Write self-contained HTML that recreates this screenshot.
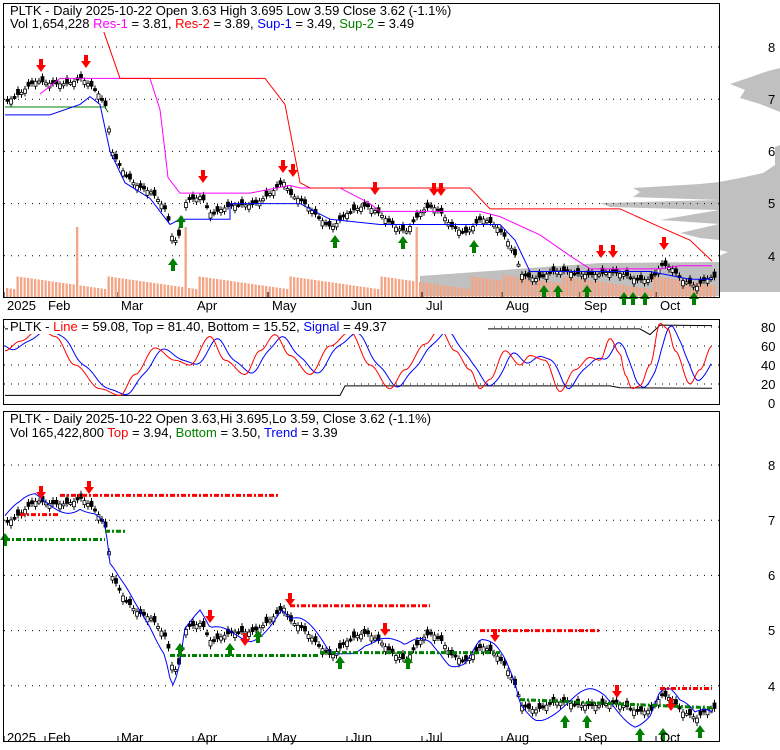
<!DOCTYPE html><html><head><style>
body{margin:0;background:#fff;width:780px;height:745px;overflow:hidden;font-family:"Liberation Sans",sans-serif}
svg text{font-family:"Liberation Sans",sans-serif;font-size:13px}
</style></head><body>
<svg id="s" width="780" height="745" xmlns="http://www.w3.org/2000/svg">
<rect width="780" height="745" fill="#fff"/>
<polygon points="780,68 768,71 742,80 730,84 745,90 740,98 760,104 775,110 780,112" fill="#c0c0c0"/>
<polygon points="780,145 775,147 775,165 763,173 740,178 719,182 700,184 633,188 640,192 633,197 719,200 600,203 610,207 719,210 660,220 719,224 680,233 700,238 719,240 719,250 728,252 719,256 719,262 600,263 420,276 420,296 719,296 719,292 780,292" fill="#c0c0c0"/>
<g id="g"></g>
<rect x="3.5" y="3.5" width="716" height="294" fill="none" stroke="#000"/>
<rect x="3.5" y="319.5" width="716" height="85" fill="none" stroke="#000"/>
<rect x="3.5" y="411.5" width="716" height="330" fill="none" stroke="#000"/>
<rect x="8" y="4" width="680" height="28" fill="#fff"/>
<text x="10" y="15">PLTK - Daily 2025-10-22 Open 3.63  High 3.695  Low 3.59  Close 3.62 (-1.1%)</text>
<text x="10" y="28">Vol 1,654,228 <tspan fill="#f0f">Res-1</tspan> = 3.81, <tspan fill="red">Res-2</tspan> = 3.89, <tspan fill="#00f">Sup-1</tspan> = 3.49, <tspan fill="green">Sup-2</tspan> = 3.49</text>
<rect x="8" y="320" width="480" height="14" fill="#fff"/>
<text x="10" y="331">PLTK - <tspan fill="red">Line</tspan> = 59.08, Top = 81.40, Bottom = 15.52, <tspan fill="#00f">Signal</tspan> = 49.37</text>
<rect x="8" y="412" width="560" height="28" fill="#fff"/>
<text x="10" y="423">PLTK - Daily 2025-10-22 Open 3.63,Hi 3.695,Lo 3.59, Close 3.62 (-1.1%)</text>
<text x="10" y="437">Vol 165,422,800 <tspan fill="red">Top</tspan> = 3.94, <tspan fill="green">Bottom</tspan> = 3.50, <tspan fill="#00f">Trend</tspan> = 3.39</text>
<g font-size="13">
<text x="7" y="310">2025</text><text x="48" y="310">Feb</text><text x="121" y="310">Mar</text><text x="197" y="310">Apr</text><text x="272" y="310">May</text><text x="351" y="310">Jun</text><text x="426" y="310">Jul</text><text x="506" y="310">Aug</text><text x="584" y="310">Sep</text><text x="660" y="310">Oct</text>
<text x="7" y="742">2025</text><text x="48" y="742">Feb</text><text x="121" y="742">Mar</text><text x="197" y="742">Apr</text><text x="272" y="742">May</text><text x="351" y="742">Jun</text><text x="426" y="742">Jul</text><text x="506" y="742">Aug</text><text x="584" y="742">Sep</text><text x="660" y="742">Oct</text>
<text x="768" y="52">8</text><text x="768" y="104">7</text><text x="768" y="156">6</text><text x="768" y="208">5</text><text x="768" y="261">4</text>
<text x="761" y="332">80</text><text x="761" y="351">60</text><text x="761" y="370">40</text><text x="761" y="389">20</text><text x="768" y="408">0</text>
<text x="768" y="470">8</text><text x="768" y="525">7</text><text x="768" y="580">6</text><text x="768" y="635">5</text><text x="768" y="691">4</text>
</g>
</svg>
<script>
var g=document.getElementById('g'),h='';
function L(x1,y1,x2,y2,c,w,d){h+='<line x1="'+x1+'" y1="'+y1+'" x2="'+x2+'" y2="'+y2+'" stroke="'+c+'" stroke-width="'+(w||1)+'"'+(d?' stroke-dasharray="'+d+'"':'')+'/>';}
function P(pts,c,w,d){h+='<polyline fill="none" stroke="'+c+'" stroke-width="'+(w||1)+'"'+(d?' stroke-dasharray="'+d+'"':'')+' points="'+pts.map(p=>p.join(',')).join(' ')+'"/>';}
var K=[[5,7.0],[20,7.1],[35,7.3],[45,7.3],[60,7.35],[80,7.4],[95,7.1],[105,6.8],[110,6.0],[120,5.7],[135,5.4],[150,5.2],[165,4.8],[172,4.2],[178,4.4],[185,5.1],[200,5.2],[210,4.8],[230,4.9],[250,5.0],[265,5.2],[282,5.4],[290,5.1],[300,5.0],[315,4.8],[330,4.6],[345,4.8],[365,4.9],[380,4.8],[395,4.6],[405,4.5],[420,4.8],[430,4.9],[440,4.8],[450,4.6],[465,4.5],[480,4.7],[495,4.5],[505,4.3],[515,4.0],[520,3.7],[535,3.6],[550,3.65],[570,3.65],[590,3.7],[605,3.7],[620,3.6],[635,3.5],[650,3.6],[660,3.9],[670,3.8],[680,3.5],[695,3.35],[705,3.55],[712,3.62]];
function interp(A,x){for(var i=1;i<A.length;i++)if(x<=A[i][0]){var a=A[i-1],b=A[i];var t=(x-a[0])/(b[0]-a[0]);t=(1-Math.cos(t*Math.PI))/2;return a[1]+(b[1]-a[1])*t;}return A[A.length-1][1];}
function price(x){for(var i=1;i<K.length;i++)if(x<=K[i][0]){var a=K[i-1],b=K[i];return a[1]+(b[1]-a[1])*(x-a[0])/(b[0]-a[0]);}return 3.62;}
function y1(p){return 47+(8-p)*52.2}function y3(p){return 465+(8-p)*55.2}
for(var p=4;p<=8;p++){L(4,y1(p),719,y1(p),'#000',1,'1 6');L(4,y3(p),719,y3(p),'#000',1,'1 6');}
[20,40,60,80].forEach(v=>L(4,403-v*0.95,719,403-v*0.95,'#000',1,'1 6'));
[4,45,118,193,268,347,422,502,580,656].forEach(x=>{L(x,292,x,298,'#000');L(x,736,x,742,'#000');});
for(var x=6;x<714;x+=3.5){var hh=8+((x*37)%13)+(x>500&&x<560?6:0);if(Math.abs(x-75)<2||Math.abs(x-415)<2||Math.abs(x-183)<2)hh=70;h+='<rect x="'+x+'" y="'+(297-hh)+'" width="2.3" height="'+hh+'" fill="#f4a585"/>';}
function candles(yf){for(var x=6;x<714;x+=3.5){var c=price(x)+Math.sin(x*1.7)*0.06,o=c+Math.cos(x*2.3)*0.1,hi=Math.max(o,c)+0.06,lo=Math.min(o,c)-0.06;L(x+1.5,yf(hi),x+1.5,yf(lo),'#000');var t=Math.min(yf(o),yf(c)),bh=Math.max(2,Math.abs(yf(o)-yf(c)));h+='<rect x="'+x+'" y="'+t+'" width="3" height="'+bh+'" fill="'+(c>o?'#fff':'#000')+'" stroke="#000" stroke-width="0.8"/>';}}
candles(y1);candles(y3);
P([[5,y1(6.85)],[105,y1(6.85)],[108,y1(6.75)]],'green');
P([[5,y1(6.7)],[50,y1(6.7)],[80,y1(6.9)],[90,y1(7.05)],[100,y1(6.9)],[110,y1(6.0)],[125,y1(5.4)],[150,y1(5.1)],[170,y1(4.6)],[180,y1(4.7)],[230,y1(4.7)],[230,y1(5.0)],[300,y1(5.0)],[330,y1(4.7)],[380,y1(4.6)],[400,y1(4.6)],[410,y1(4.6)],[500,y1(4.6)],[515,y1(4.3)],[530,y1(3.7)],[650,y1(3.7)],[690,y1(3.55)],[712,y1(3.55)]],'#00f');
P([[40,y1(7.1)],[60,y1(7.4)],[150,y1(7.4)],[160,y1(6.8)],[165,y1(6.0)],[168,y1(5.5)],[180,y1(5.2)],[250,y1(5.2)],[290,y1(5.35)],[300,y1(5.3)],[340,y1(5.3)],[370,y1(5.0)],[380,y1(4.85)],[480,y1(4.85)],[500,y1(4.75)],[540,y1(4.4)],[570,y1(4.0)],[590,y1(3.75)],[660,y1(3.75)],[680,y1(3.81)],[712,y1(3.81)]],'#f0f');
P([[100,y1(8.5)],[120,y1(7.4)],[265,y1(7.4)],[285,y1(6.9)],[300,y1(5.4)],[310,y1(5.3)],[470,y1(5.3)],[490,y1(4.9)],[620,y1(4.9)],[660,y1(4.55)],[690,y1(4.3)],[712,y1(3.9)]],'red');
function arrow(x,y,up,c){if(up)h+='<polygon points="'+x+','+y+' '+(x-5)+','+(y+7)+' '+(x-2)+','+(y+7)+' '+(x-2)+','+(y+13)+' '+(x+2)+','+(y+13)+' '+(x+2)+','+(y+7)+' '+(x+5)+','+(y+7)+'" fill="'+c+'"/>';else h+='<polygon points="'+x+','+y+' '+(x-5)+','+(y-7)+' '+(x-2)+','+(y-7)+' '+(x-2)+','+(y-13)+' '+(x+2)+','+(y-13)+' '+(x+2)+','+(y-7)+' '+(x+5)+','+(y-7)+'" fill="'+c+'"/>';}
[[41,72],[86,68],[203,183],[283,173],[293,177],[375,195],[434,196],[441,196],[601,258],[613,258],[664,250]].forEach(a=>arrow(a[0],a[1],0,'red'));
[[173,258],[181,215],[335,235],[403,236],[474,240],[544,285],[558,285],[587,285],[624,292],[633,292],[645,292],[694,292]].forEach(a=>arrow(a[0],a[1],1,'green'));
function ry(v){return 403-v*0.95}
var R=[[5,55],[20,65],[40,78],[55,70],[75,40],[100,15],[120,8],[135,30],[155,58],[175,45],[190,40],[210,70],[225,45],[245,30],[260,55],[275,72],[290,50],[310,30],[330,60],[350,75],[370,40],[390,15],[405,35],[425,62],[440,78],[455,55],[470,35],[480,15],[490,25],[505,55],[520,40],[530,50],[545,45],[560,12],[575,35],[590,48],[600,45],[610,68],[620,52],[625,30],[632,15],[640,18],[650,40],[660,84],[668,78],[675,55],[690,20],[700,35],[712,60]];
var rl=[],sp=[];for(var x=5;x<=712;x+=2){rl.push([x,ry(interp(R,x))]);var s=(interp(R,x-4)+interp(R,x-8)+interp(R,x-12))/3;sp.push([x,ry(s)]);}
P([[5,ry(78)],[640,ry(78)],[650,ry(72)],[660,ry(82)],[712,ry(81.4)]],'#000');
P([[5,ry(8)],[340,ry(8)],[345,ry(18)],[610,ry(18)],[620,ry(16)],[712,ry(15.5)]],'#000');
P(sp,'#00f');P(rl,'red');
var tl=[];for(var x=5;x<714;x+=3){tl.push([x,y3(price(x)+0.25*Math.sin(x/15))]);}
P(tl,'#00f');
L(60,y3(7.45),280,y3(7.45),'red',3,'5 2 2 2');L(290,y3(5.45),430,y3(5.45),'red',3,'5 2 2 2');L(480,y3(5.0),600,y3(5.0),'red',3,'5 2 2 2');L(660,y3(3.95),712,y3(3.95),'red',3,'5 2 2 2');L(20,y3(7.1),60,y3(7.1),'red',3,'5 2 2 2');
L(5,y3(6.65),105,y3(6.65),'green',3,'5 2 2 2');L(105,y3(6.8),125,y3(6.8),'green',3,'5 2 2 2');L(170,y3(4.55),320,y3(4.55),'green',3,'5 2 2 2');L(320,y3(4.6),500,y3(4.6),'green',3,'5 2 2 2');L(520,y3(3.75),712,y3(3.6),'green',3,'5 2 2 2');
[[41,499],[89,494],[210,623],[245,646],[290,606],[385,636],[495,642],[617,698],[671,711]].forEach(a=>arrow(a[0],a[1],0,'red'));
[[5,533],[180,643],[230,643],[258,630],[340,656],[408,656],[565,715],[587,715],[640,728],[663,728],[700,725]].forEach(a=>arrow(a[0],a[1],1,'green'));
g.innerHTML=h;
</script>
</body></html>
